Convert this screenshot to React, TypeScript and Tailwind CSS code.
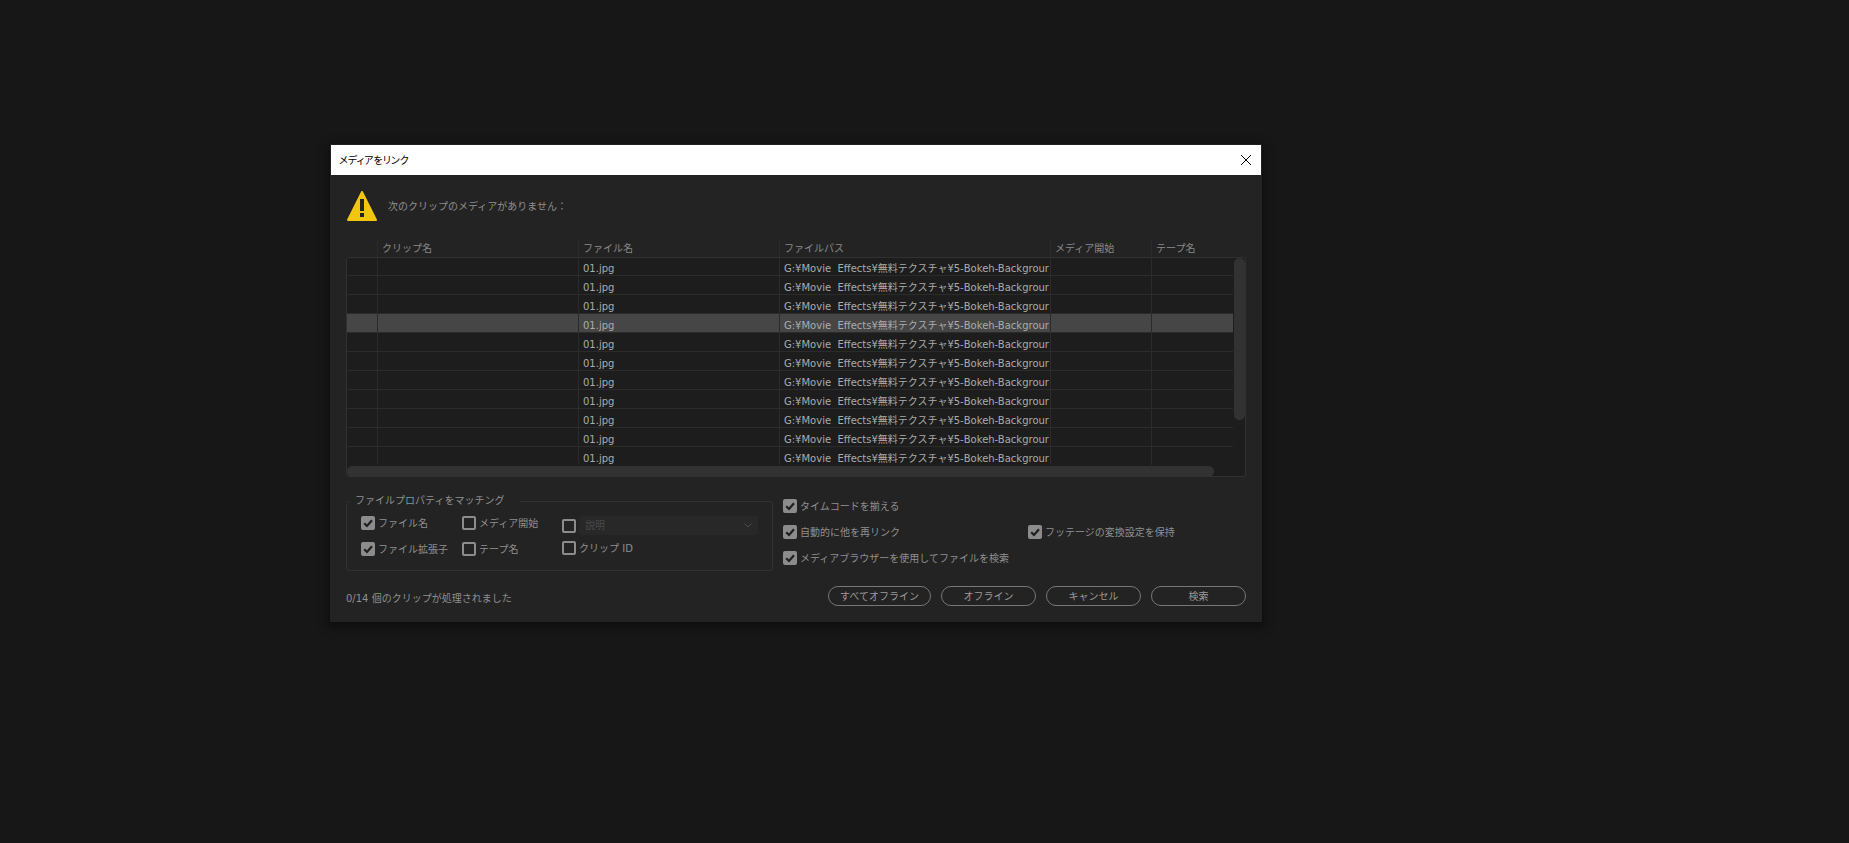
import type { ReactNode } from "react";

const clips = Array.from({ length: 11 }, (_, i) => ({
  id: i,
  file: "01.jpg",
  path: "G:¥Movie\u00a0 Effects¥無料テクスチャ¥5-Bokeh-Backgrour",
  selected: i === 3,
}));

const headers = ["", "クリップ名", "ファイル名", "ファイルパス", "メディア開始", "テープ名"];

function CheckField({ label, checked = false, hideLabel = false }: { label: string; checked?: boolean; hideLabel?: boolean }) {
  return (
    <label className="flex h-[14px] items-center gap-[3px] whitespace-nowrap">
      <span className="grid size-[14px] shrink-0">
        <input
          type="checkbox"
          defaultChecked={checked}
          aria-label={label}
          className="peer col-start-1 row-start-1 size-[14px] appearance-none rounded-[2px] border-2 border-[#8c8c8c] checked:bg-[#8c8c8c]"
        />
        <svg viewBox="0 0 14 14" className="pointer-events-none invisible col-start-1 row-start-1 size-[14px] peer-checked:visible" aria-hidden="true">
          <path d="M3.2 7.2 L6 10 L11 4.2" fill="none" stroke="#1f1f1f" strokeWidth="2.2" />
        </svg>
      </span>
      {!hideLabel && <span className="pt-px leading-[14px]">{label}</span>}
    </label>
  );
}

function PillButton({ children, wide = false }: { children: ReactNode; wide?: boolean }) {
  return (
    <button
      type="button"
      className={`flex h-5 items-center justify-center rounded-full border border-[#777777] pt-[2px] leading-[14px] text-[#9a9a9a] ${wide ? "w-[103px]" : "w-[95px]"}`}
    >
      {children}
    </button>
  );
}

function ClipTable() {
  return (
    <div className="relative mt-[19px] pb-3">
      <div className="absolute inset-x-0 top-[17px] bottom-0 rounded-[3px] border border-[#313131] bg-[#1d1d1d]" />
      <div className="relative mr-[13px] ml-px h-[225px] overflow-hidden">
        <table className="w-full table-fixed border-separate border-spacing-0">
          <colgroup>
            <col className="w-[31px]" />
            <col className="w-[201px]" />
            <col className="w-[201px]" />
            <col className="w-[271px]" />
            <col className="w-[101px]" />
            <col />
          </colgroup>
          <thead>
            <tr>
              {headers.map((h, i) => (
                <th key={i} scope="col" className="h-[17px] border-r border-[#2b2b2b] p-0 pl-1 text-left leading-[16px] font-normal text-[#8a8a8a] last:border-r-0">
                  {h}
                </th>
              ))}
            </tr>
          </thead>
          <tbody className="text-[#ababab]">
            {clips.map((c) => (
              <tr key={c.id} className={c.selected ? "bg-[#464646]" : ""}>
                {["", "", c.file, c.path, "", ""].map((v, i) => (
                  <td key={i} className="h-[19px] border-r border-b border-[#2b2b2b] p-0 pt-1.5 pl-1 align-top leading-3 whitespace-nowrap last:border-r-0">
                    {v}
                  </td>
                ))}
              </tr>
            ))}
          </tbody>
        </table>
      </div>
      <div className="absolute top-[18px] right-px h-[162px] w-[11px] rounded-full bg-[#323232]" />
      <div className="absolute right-8 bottom-0 left-px h-[11px] rounded-full bg-[#323232]" />
    </div>
  );
}

export default function App() {
  return (
    <main className="min-h-screen bg-[#171717] pt-[144px] pl-[330px] font-['DejaVu_Sans','Noto_Sans_CJK_JP',sans-serif] text-[10px] text-[#8f8f8f]">
      <section role="dialog" aria-labelledby="dialog-title" className="w-full max-w-[932px] border border-[#232323] bg-[#232323] shadow-[0_3px_8px_2px_#0e0e0e]">
        <header className="flex h-[30px] items-center justify-between bg-white pr-[9px] pl-2 text-black">
          <h1 id="dialog-title" className="font-['Noto_Sans_CJK_JP',sans-serif] text-[10px] leading-[16px] font-normal [font-feature-settings:'palt']">
            メディアをリンク
          </h1>
          <button type="button" aria-label="閉じる" className="grid size-3 place-items-center">
            <svg viewBox="0 0 12 12" className="size-3" aria-hidden="true">
              <path d="M1 1 L11 11 M11 1 L1 11" fill="none" stroke="#000" strokeWidth="1" />
            </svg>
          </button>
        </header>

        <div className="px-[15px] pt-4 pb-[15px]">
          <div className="flex items-center gap-[11px]">
            <svg viewBox="0 0 31 30" className="h-[30px] w-[31px]" aria-hidden="true">
              <path d="M16 1 L30 29 H2 Z" fill="#f2c50f" stroke="#f2c50f" strokeWidth="2" strokeLinejoin="round" />
              <path d="M14 8 H18 V20 H14 Z M14 22 H18 V26 H14 Z" fill="#232323" />
            </svg>
            <p className="pt-[2px] leading-[16px]">次のクリップのメディアがありません：</p>
          </div>

          <ClipTable />

          <div className="mt-4 flex items-start gap-[10px]">
            <fieldset className="w-[427px] min-w-0 shrink-0 rounded-[3px] border border-[#313131]">
              <legend className="ml-[3px] pr-4 pl-[5px] leading-[16px]">ファイルプロパティをマッチング</legend>
              <div className="flex pt-[7px] pr-[14px] pb-[14px] pl-[14px]">
                <div className="flex w-[101px] flex-col gap-3">
                  <CheckField label="ファイル名" checked />
                  <CheckField label="ファイル拡張子" checked />
                </div>
                <div className="flex w-[100px] flex-col gap-3">
                  <CheckField label="メディア開始" />
                  <CheckField label="テープ名" />
                </div>
                <div className="flex flex-1 flex-col gap-[6px]">
                  <div className="flex h-[19px] items-center gap-[3px]">
                    <CheckField label="説明で照合" hideLabel />
                    <div className="grid flex-1">
                      <select disabled aria-label="説明" className="col-start-1 row-start-1 h-[19px] appearance-none rounded-[3px] bg-[#282828] pl-[6px] leading-[16px] text-[#4a4a4a] opacity-100">
                        <option>説明</option>
                      </select>
                      <svg viewBox="0 0 8 5" className="pointer-events-none col-start-1 row-start-1 mr-[6px] h-[5px] w-2 self-center justify-self-end" aria-hidden="true">
                        <path d="M0.5 0.5 L4 4 L7.5 0.5" fill="none" stroke="#4a4a4a" />
                      </svg>
                    </div>
                  </div>
                  <CheckField label="クリップ ID" />
                </div>
              </div>
            </fieldset>

            <div className="grid flex-1 grid-cols-[245px_auto] gap-y-3 pt-[6px]">
              <div className="col-span-2">
                <CheckField label="タイムコードを揃える" checked />
              </div>
              <CheckField label="自動的に他を再リンク" checked />
              <CheckField label="フッテージの変換設定を保持" checked />
              <div className="col-span-2">
                <CheckField label="メディアブラウザーを使用してファイルを検索" checked />
              </div>
            </div>
          </div>

          <footer className="mt-[15px] flex items-center justify-between">
            <p className="pt-[5px] leading-[15px]">0/14 個のクリップが処理されました</p>
            <div className="flex gap-[10px]">
              <PillButton wide>すべてオフライン</PillButton>
              <PillButton>オフライン</PillButton>
              <PillButton>キャンセル</PillButton>
              <PillButton>検索</PillButton>
            </div>
          </footer>
        </div>
      </section>
    </main>
  );
}
